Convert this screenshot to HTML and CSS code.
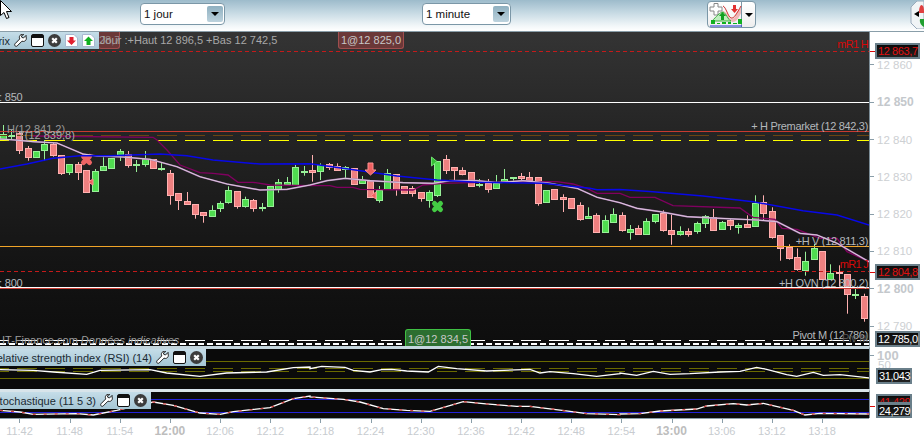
FILE: index.html
```html
<!DOCTYPE html>
<html lang="fr">
<head>
<meta charset="utf-8">
<title>Graphique</title>
<link rel="stylesheet" href="styles.css">
</head>
<body>
<svg class="defs" width="0" height="0" aria-hidden="true">
  <defs>
    <symbol id="wrench" viewBox="0 0 14 14"><path d="M13 1.500 10.200 4.300 8.400 3.600 8 2 10.400.6C8.600-.2 6.400.8 5.900 2.600 5.600 3.600 5.800 4.500 6.200 5.300L1.200 10.400C.5 11.200.6 12.200 1.200 12.800 1.900 13.500 2.900 13.400 3.500 12.800L8.600 7.700C9.500 8.100 10.600 8.200 11.500 7.700 13 7 13.800 5.100 13 3.200Z" fill="#fff" stroke="#111" stroke-width="1"/></symbol>
    <symbol id="win" viewBox="0 0 13 13"><rect x=".5" y=".5" width="12" height="12" rx="1.5" fill="#fff" stroke="#111"/><rect x="1" y="1" width="11" height="3" fill="#111"/></symbol>
    <symbol id="close" viewBox="0 0 13 13"><circle cx="6.500" cy="6.500" r="6.500" fill="#3c3c3c"/><path d="M4.200 4.200 8.800 8.800M8.800 4.200 4.200 8.800" stroke="#fff" stroke-width="2.200"/></symbol>
    <symbol id="docdown" viewBox="0 0 13 13"><path d="M.5.5H9L12.500 4V12.500H.5Z" fill="#fff" stroke="#a8b8d0"/><path d="M4.500 3H8.500V6.500H11L6.500 11 2 6.500H4.500Z" fill="#e02030"/></symbol>
    <symbol id="docup" viewBox="0 0 13 13"><path d="M.5.5H9L12.500 4V12.500H.5Z" fill="#fff" stroke="#a8b8d0"/><path d="M4.500 11H8.500V7H11L6.500 2.500 2 7H4.500Z" fill="#10b020"/></symbol>
  </defs>
</svg>

<header class="toolbar">
  <div class="select select-day"><span>1 jour</span><i class="select-btn"></i></div>
  <div class="select select-minute"><span>1 minute</span><i class="select-btn"></i></div>
  <div class="chart-btn">
    <span class="chart-btn-icon">
      <svg width="33" height="24" viewBox="0 0 33 24">
        <path d="M5 .5H9V4H13V8H9V12H5V8H1V4H5Z" fill="#fff" stroke="#888"/>
        <path d="M13 9C15 7 18 10 20 14 22 18 25 16 27 12 28 9 30 6 32 4V10C30 15 27 19 24 19 21 19 18 13 15 11Z" fill="#f0b8b8"/>
        <path d="M14 3C17 4 19 14 22 15 25 16 28 10 32 3" fill="none" stroke="#d03030"/>
        <path d="M3 18C7 14 11 9 14 9 17 10 19 17 22 18H3Z" fill="#bfeebf" stroke="#40b040"/>
        <path d="M12 17V13H10L13.500 9 17 13H15V17Z" fill="#10a020"/>
        <path d="M24 2H27V6H29L25.500 10 22 6H24Z" fill="#e03030"/>
        <path d="M2 17H6V21H2ZM8 20H11V21H8ZM13 19H17V21H13ZM19 19H22V21H19ZM24 20H28V21H24ZM29 16H33V21H29Z" fill="#10b020"/>
        <path d="M1 23H33" stroke="#2030d0"/>
      </svg>
    </span>
    <span class="chart-btn-drop"><i class="tri"></i></span>
  </div>
  <svg class="side-grip" width="14" height="28" viewBox="0 0 14 28">
    <path d="M14 0H7L1 6V22L7 28H14Z" fill="#f0f4f6" stroke="#9ab"/>
    <path d="M9 16V10L4 13Z" fill="#000"/>
    <path d="M11 4C14 4 14 8 14 12H9C9 9 9 6 11 4Z" fill="#e04040"/>
    <path d="M10 18H14V26C12 25 9 22 10 18Z" fill="#20a030"/>
  </svg>
  <svg class="cursor" width="13" height="20" viewBox="0 0 13 20"><path d="M.5 .5V15.500L4 12.500 6.500 18.500 9 17.500 6.500 11.500H11.500Z" fill="#fff" stroke="#000"/></svg>
</header>

<div class="workspace">
  <div class="panes">
    <section class="pane pane-main">
      <svg id="mainChart" class="plot" width="869" height="314" viewBox="0 32 869 314"></svg>
      <div class="order order-old">28,7</div>
      <div class="label range">Jour :+Haut 12 896,5 +Bas 12 742,5</div>
      <div class="tab tab-top">
        <span class="tab-name">Matrix</span>
        <svg class="ico" width="13" height="13"><use href="#wrench"/></svg>
        <svg class="ico" width="13" height="13"><use href="#win"/></svg>
        <svg class="ico" width="13" height="13"><use href="#close"/></svg>
        <svg class="ico" width="13" height="13"><use href="#docdown"/></svg>
        <svg class="ico" width="13" height="13"><use href="#docup"/></svg>
      </div>
      <div class="order order-sell">1@12 825,0</div>
      <div class="order order-buy">1@12 834,5</div>
      <div class="label red end r1h">mR1 H</div>
      <div class="label lvl850">: 850</div>
      <div class="label lvl800">: 800</div>
      <div class="label h1">H(12 841,2)</div>
      <div class="label h2">T(12 839,8)</div>
      <div class="label end pre">+ H Premarket (12 842,3)</div>
      <div class="label end hv">+H V (12 811,3)</div>
      <div class="label red end r1j">mR1 J</div>
      <div class="label end ovn">+H OVN (12 800,2)</div>
      <div class="label end pivot">Pivot M (12 786)</div>
      <div class="label end pivs">Piv M</div>
      <div class="label credit">IT-Finance.com <em>Données indicatives</em></div>
    </section>
    <section class="pane pane-rsi">
      <svg id="rsiChart" class="plot" width="869" height="40" viewBox="0 349 869 40"></svg>
      <div class="tab tab-rsi">
        <span class="tab-name">Relative strength index (RSI) (14)</span>
        <svg class="ico" width="13" height="13"><use href="#wrench"/></svg>
        <svg class="ico" width="13" height="13"><use href="#win"/></svg>
        <svg class="ico" width="13" height="13"><use href="#close"/></svg>
      </div>
    </section>
    <section class="pane pane-sto">
      <svg id="stoChart" class="plot" width="869" height="26" viewBox="0 392 869 26"></svg>
      <div class="tab tab-sto">
        <span class="tab-name">Stochastique (11 5 3)</span>
        <svg class="ico" width="13" height="13"><use href="#wrench"/></svg>
        <svg class="ico" width="13" height="13"><use href="#win"/></svg>
        <svg class="ico" width="13" height="13"><use href="#close"/></svg>
      </div>
    </section>
    <div class="time-wrap">
      <div class="time-axis">
        <span>11:42</span><span>11:48</span><span>11:54</span><span class="major">12:00</span><span>12:06</span><span>12:12</span><span>12:18</span><span>12:24</span><span>12:30</span><span>12:36</span><span>12:42</span><span>12:48</span><span>12:54</span><span class="major">13:00</span><span>13:06</span><span>13:12</span><span>13:18</span>
      </div>
    </div>
  </div>
  <aside class="price-side">
    <div class="price-axis">
      <span>12 860</span><span class="major">12 850</span><span>12 840</span><span>12 830</span><span>12 820</span><span>12 810</span><span class="major">12 800</span><span>12 790</span>
    </div>
    <div class="osc-axis">
      <span class="major">100</span>
      <span class="fifty">50</span>
    </div>
    <div class="value v-r1h red-val">12 863,7</div>
    <div class="value v-r1j red-val">12 804,8</div>
    <div class="value v-piv">12 785,0</div>
    <div class="value v-rsi">31,043</div>
    <div class="value v-sto2 red-val">41,429</div>
    <div class="value v-sto">24,279</div>
  </aside>
</div>
<script src="chart.js"></script>
</body>
</html>
```

FILE: styles.css
```css
* { box-sizing: border-box; }
html, body { margin: 0; padding: 0; width: 924px; height: 437px; overflow: hidden; background: #fff; }
body { font-family: "Liberation Sans", Arial, sans-serif; font-size: 11px; position: relative; }
.defs { position: absolute; }

/* top toolbar */
.toolbar { height: 32px; position: relative; display: flex; align-items: flex-start; padding-top: 3px; background: linear-gradient(#9dbbcb 0, #c4d8e2 12px, #f2f7f9 26px, #fff 31px); border-bottom: 1px solid #8a9ea9; }
.select { width: 85px; height: 22px; background: #fff; border: 1px solid #7b97a7; border-radius: 4px; display: flex; align-items: center; justify-content: space-between; padding: 0 1px 0 3px; color: #111; font-size: 11.500px; }
.select-day { margin-left: 140px; }
.select-minute { width: 89px; margin-left: 197px; }
.select-btn { width: 16px; height: 16px; border-radius: 2px; background: linear-gradient(#8fb0c0, #bcd2dd); position: relative; }
.select-btn::after, .tri { content: ""; display: block; width: 0; height: 0; border-left: 4px solid transparent; border-right: 4px solid transparent; border-top: 4px solid #000; }
.select-btn::after { position: absolute; left: 4px; top: 6px; }
.chart-btn { width: 49px; height: 27px; margin: -2px 0 0 196px; display: flex; border: 1px solid #7b97a7; border-radius: 4px; background: linear-gradient(#fff, #eee); }
.chart-btn-icon { width: 34px; padding: 1px 0 0 1px; border-right: 1px solid #7b97a7; }
.chart-btn-drop { flex: 1; display: flex; align-items: center; justify-content: center; }
.side-grip { margin: -2px 0 0 154px; }
.cursor { position: absolute; left: 0; top: 0; }

/* work area */
.workspace { display: flex; height: 405px; }
.panes { width: 870px; display: flex; flex-direction: column; }
.pane { position: relative; width: 870px; overflow: hidden; border-right: 1px solid #7b8c96; }
.plot { display: block; }
.pane-main { height: 314px; background: linear-gradient(#343434 0, #232323 110px, #141414 230px, #0d0d0d 100%); }
.pane-rsi { height: 43px; background: #0a0a0a; border-top: 3px solid #c5d6de; }
.pane-sto { height: 29px; background: #0a0a0a; border-top: 3px solid #d8e4ea; }
.time-wrap { height: 19px; border-top: 1px solid #8a9ea9; overflow: hidden; width: 869px; }
.time-axis { display: flex; margin-left: -5.600px; }
.time-axis span { flex: 0 0 50.160px; text-align: center; color: #c8ccd0; font-size: 11px; padding-top: 6px; position: relative; }
.time-axis span::before { content: ""; position: absolute; left: 50%; top: 0; width: 1px; height: 4px; background: #8a9ea9; }
.time-axis .major { font-weight: bold; font-size: 12px; padding-top: 5px; color: #bdbdbd; }

/* tabs */
.tab { position: absolute; left: 0; top: 0; display: flex; align-items: center; justify-content: flex-end; gap: 4px; height: 17px; background: linear-gradient(#c5dde8, #a5c6d5); color: #1b2a33; font-size: 11px; overflow: hidden; white-space: nowrap; }
.tab-top { width: 99px; padding-right: 4px; }
.tab-name { flex: none; }
.ico { flex: none; display: block; }
.tab-rsi { width: 206px; padding-right: 3px; }
.tab-sto { width: 151px; padding-right: 4px; }

/* chart texts */
.label { position: absolute; color: #b4b8bc; font-size: 11px; line-height: 14px; white-space: nowrap; }
.label.end { right: 1px; letter-spacing: -0.320px; }
.label.red { color: #d80808; font-size: 11px; letter-spacing: -0.700px; }
.range { left: 100px; top: 1px; color: #a8a8a8; }
.r1h { top: 5px; }
.lvl850 { left: -1px; top: 58px; letter-spacing: -0.200px; }
.lvl800 { left: -1px; top: 244px; letter-spacing: -0.200px; }
.h1 { left: 7px; top: 90px; color: #999; }
.h2 { left: 18px; top: 96px; color: #aaa; }
.pre { top: 87px; }
.hv { top: 202px; }
.r1j { top: 225px; }
.ovn { top: 244px; }
.pivot { top: 296px; }
.pivs { top: 299px; color: #555; }
.credit { left: 2px; top: 301px; color: #9c9c9c; }
.order { position: absolute; font-size: 11px; color: #c8c8c8; text-align: center; line-height: 14px; }
.order-sell { left: 338px; top: 0; width: 66px; height: 17px; background: #6b3838; border: 1px solid #a04e4e; border-top: 0; border-radius: 0 0 3px 3px; padding-top: 1px; }
.order-old { left: 98px; top: 0; width: 22px; height: 17px; background: #6b3838; border: 1px solid #a04e4e; border-top: 0; border-radius: 0 0 3px 3px; padding-top: 1px; color: #9a8a8a; overflow: hidden; text-align: left; }
.order-buy { left: 405px; top: 297px; width: 66px; height: 17px; background: #2c6e30; border: 1px solid #3fc044; border-bottom: 0; border-radius: 3px 3px 0 0; padding-top: 2px; }

/* price side */
.price-side { width: 54px; position: relative; }
.price-axis { display: flex; flex-direction: column; padding-top: 14.300px; }
.price-axis span, .osc-axis span { height: 37.300px; display: flex; align-items: center; gap: 3px; color: #cdd0d3; font-size: 11.500px; }
.price-axis span::before, .osc-axis .major::before { content: ""; width: 4px; height: 1px; background: #8a9ea9; flex: none; }
.price-axis .major, .osc-axis .major { font-weight: bold; font-size: 12px; color: #c4c8cc; }
.osc-axis { position: absolute; left: 0; top: 310px; }
.osc-axis span { height: 26px; }
.osc-axis .major { font-size: 13px; }
.osc-axis .fifty { position: absolute; left: 8px; top: 15px; height: 16px; }
.value { position: absolute; left: 5px; height: 16px; padding: 0 1px; background: linear-gradient(#0a0a0a, #222); border: 2px solid #6a7f8a; color: #fff; font-size: 11px; line-height: 12px; white-space: nowrap; letter-spacing: -0.400px; }
.red-val { color: #e01010; }
.v-r1h::before, .v-r1j::before, .v-sto::before { content: ""; position: absolute; left: -7px; top: 6px; width: 5px; height: 1px; background: #d80808; }
.v-r1h { top: 11px; width: 45px; }
.v-r1j { top: 232px; width: 45px; }
.v-piv { top: 299px; width: 45px; }
.v-rsi { top: 336px; width: 36px; left: 6px; }
.v-sto2 { top: 362px; width: 36px; left: 6px; height: 10px; line-height: 12px; overflow: hidden; }
.v-sto { top: 371px; width: 36px; left: 6px; height: 15px; }
.v-sto::before { left: -8px; top: 1px; }

/* svg strokes */
.c-up { fill: #50dc50; stroke: #98f098; }
.w-up { stroke: #98f098; }
.c-dn { fill: #ee8080; stroke: #ffb0b0; }
.w-dn { stroke: #ffb0b0; }
.ln { fill: none; stroke-width: 1; }
.dash-red { stroke: #c41a1a; stroke-dasharray: 4 3; }
.solid-white { stroke: #fff; }
.solid-red { stroke: #c83a30; }
.dash-brown { stroke: #6a4412; stroke-dasharray: 20 8; stroke-dashoffset: 11; }
.dash-yellow { stroke: #ffff00; stroke-dasharray: 20 8; stroke-dashoffset: 11; }
.solid-orange { stroke: #f0a428; }
.dash-white { stroke: #fff; stroke-dasharray: 20 8; stroke-dashoffset: 11; }
.dash-white2 { stroke: #fff; stroke-width: 2; stroke-dasharray: 6 3; }
.ma-blue { stroke: #0808e8; stroke-width: 1.500; }
.ma-mag { stroke: #800060; stroke-width: 1.300; }
.ma-pink { stroke: #a070a8; stroke-width: 1.700; }
.ma-white { stroke: #ecdcec; stroke-width: 0.800; }
.olive { stroke: #6a6a00; }
.olive-d { stroke: #6a6a00; stroke-dasharray: 20 8; stroke-dashoffset: 11; }
.osc-w { stroke: #fff; stroke-width: 1.300; }
.osc-r { stroke: #d04848; stroke-width: 1.300; stroke-dasharray: 3 8; }
.blue { stroke: #2222d8; }
.mk-red { fill: #ee6060; stroke: #ff9090; }
.mk-green { fill: #38c038; stroke: #70e070; }
.x-red { stroke: #ee6464; stroke-width: 5; fill: none; }
.x-green { stroke: #44cc44; stroke-width: 5; fill: none; }
```

FILE: chart.js
```js
var NS = "http://www.w3.org/2000/svg";

function add(svg, tag, attrs) {
  var el = document.createElementNS(NS, tag);
  for (var k in attrs) el.setAttribute(k, attrs[k]);
  svg.appendChild(el);
  return el;
}
function poly(pts) {
  return pts.map(function (p, i) { return (i ? "L" : "M") + p[0] + " " + p[1]; }).join("");
}
function hline(svg, y, cls) {
  add(svg, "path", { d: "M0 " + y + "H869", "class": "ln " + cls });
}
function zoomed(pts, x0, y0) {
  return pts.map(function (p) { return [x0 + p[0] / 3, y0 + p[1] / 3]; });
}

/* x, body top, body bottom, wick top, wick bottom */
var UP = [
  [3,134,139,125,141],[11,135,136,130,140],[36,151.3,156.7,151,157],[44,144,150.3,140,160.7],
  [69,164.3,171.7,164,175],[95,171.3,190.7,169,192],[103,166.3,169.7,157.3,170],[111,158,167.7,158,168],
  [120,151.3,155.3,149,161],[136,164,164.5,160,172],[145,158.7,163.7,151,166.7],[161,167.7,168.7,162.7,170.7],
  [212,210.3,215.7,205.3,216.7],[220,203.3,207.7,201.3,212],[228,190.3,201.7,186.3,203.7],[245,199.3,205.7,196.7,207.7],
  [262,207,207.5,203,211.3],[270,186.3,205.7,186,206],[278,182.3,189,179,192.7],[287,182,184,177,185],
  [295,167.3,184.7,165,185],[304,170.7,171,166,175.7],[320,164.7,170.7,163.3,180],[345,167.3,168.7,166,178],
  [362,179.7,182.7,176,183],[379,190,199.7,186,202.7],[387,173,189,169,189.5],[429,192.3,199.7,190.3,207.7],
  [437,161.3,194.7,161,197],[479,184,184.5,179,187.3],[496,183.3,187.7,175,188],[504,179,180.7,169,181],
  [513,177,177.7,177,180.7],[546,190.3,201.7,190,203],[588,216.3,217.7,207.3,218],[605,220.3,231.7,215.3,232],
  [613,214.3,221.7,208.3,222.7],[630,229.3,231.7,225,239.7],[646,221.3,233.7,218.3,234],[655,214.3,220.7,214,223.3],
  [680,231.3,233.7,226.3,235.7],[697,223.3,230.7,221.7,233.7],[705,216.3,222.7,215,228],[722,222.3,228.7,221,230],
  [738,225.3,226.7,223.3,233.7],[755,203,225.7,195.3,226],[805,260.7,269.7,251.7,275.7],[814,248.3,259.3,244,260],
  [830,273.3,278.7,264.3,279],[855,294,294.5,289,299]
];
var DOWN = [
  [19,133,149.5,132,154],[28,148.3,157.3,146,160.7],[53,144.3,154.7,142.7,156.7],[61,155.3,172.7,155,175],
  [78,164.3,171.7,162,180],[86,170,191.7,170,192.7],[128,154,164.7,151,167.7],[153,159.3,167.7,159,169],
  [170,173.3,194.7,170,204.7],[178,193.3,199.7,193,210],[187,201.3,203.7,192,205],[195,204.3,213.7,204,218.7],
  [203,212.3,214.7,212,222.7],[237,191.3,205.7,191,208.7],[253,200.3,207.7,199,211.7],[312,170,171.7,155,181.7],
  [329,164.3,166.7,163,170],[337,166,169.7,163.3,170],[354,168.3,183.7,168,184],[370,180.7,196.7,180,197.5],
  [396,174.3,189.3,174,195.7],[404,186.3,192.7,186,193],[412,188.3,192.7,186,196.7],[421,192.3,197.7,192,201.7],
  [446,159.3,169.7,155,174],[454,167.3,169.7,167,180],[462,170.3,173.7,167.3,175.3],[471,172.3,185.7,172,186],
  [488,183,188.7,179,192.7],[521,176,177.7,173,180.7],[529,177.3,180,172,180.5],[538,177.3,202.7,177,205.7],
  [554,189.3,198.7,189,199],[563,197.3,199.3,194.3,212],[571,198.3,207.7,198,208.5],[580,205.3,218.7,202.3,220.7],
  [596,215.3,231.7,213.3,232],[622,215.3,229.7,212.3,231.7],[638,228.3,233.7,225.3,234],[663,213.3,229.7,210.3,231.7],
  [671,230.3,233.7,214.7,244.7],[688,231.3,233.7,228.3,236.7],[713,217.3,229.7,209,230.7],[730,220,224.7,218.3,230],
  [747,224.3,226.7,215.3,228],[763,202.3,212.7,195.3,220.7],[772,211,236.7,207.3,238.7],[780,235.3,247.7,235,260.7],
  [789,246.7,257.7,244.3,259.7],[797,257.3,268.7,248.3,270.7],[822,251.3,279.3,251,279.5],[839,272,273.3,265.3,286.7],
  [847,274.3,294.3,274,313.7],[864,296.3,317.7,293.7,321.7]
];

function candles(svg, list, body, wick) {
  list.forEach(function (c) {
    var x = c[0];
    add(svg, "path", { d: "M" + (x + 0.5) + " " + c[3] + "V" + c[4], "class": wick, fill: "none" });
    var t = Math.round(c[1]) + 0.5;
    var h = Math.max(1, Math.round(c[2]) - Math.round(c[1]));
    add(svg, "rect", { x: x - 2.5, y: t, width: 6, height: h, "class": body });
  });
}

var BLUE = [[0,169],[27,164],[53,158.3],[80,155.7],[110,155.7],[160,154],[187,155.7],[213,160],[260,164],[310,163.8],
  [343,168.3],[397,176],[437,180],[477,182.3],[543,183.3],[590,188.3],[597,189.7],[620,189.5],[653,191.7],[703,196],
  [753,201.7],[803,210.7],[837,215],[869,225]];
var PINK = [[0,139],[15,140],[33,141.7],[57,143],[83,154],[97,156],[123,157],[150,159.3],[177,166.7],[200,176.7],[227,184],
  [260,190],[287,189.3],[310,185],[327,180.7],[345,178.3],[370,180.7],[403,182.7],[433,183.3],[450,180.7],[477,180.7],
  [497,182.7],[523,180.7],[550,183.3],[577,188.3],[597,197.3],[620,202.7],[637,208.3],[660,211.7],[687,216.7],[720,218.3],
  [757,220],[777,221.7],[800,233.3],[817,235],[837,243.3],[869,261.7]];
var MAG = [[33,136],[153,137.3],[157,140],[167,150],[180,165],[200,172.7],[213,173.3],[228,175],[238,182.3],[253,182.3],
  [270,185],[310,185.7],[330,185.7],[337,187.3],[353,187.3],[360,189.3],[413,190],[423,185],[443,183.3],[470,182.7],
  [543,181.7],[557,181.7],[573,184],[587,188.3],[597,193.3],[620,193.3],[630,197.3],[655,197.3],[673,205.7],[740,208],
  [753,217.3],[775,219.3],[782,228.3],[797,229.3],[820,238.3],[837,238.3],[847,251.7],[869,261.7]];

var main = document.getElementById("mainChart");

/* trade markers under the averages */
function cross(cx, cy, cls) {
  add(main, "path", {
    d: "M" + (cx - 3) + " " + (cy - 3) + "l6 6m0-6l-6 6",
    "class": cls,
    "stroke-linecap": "round"
  });
}

candles(main, DOWN, "c-dn", "w-dn");
candles(main, UP, "c-up", "w-up");
hline(main, 51.5, "dash-red");
hline(main, 102.5, "solid-white");
hline(main, 131.5, "solid-red");
hline(main, 135.5, "dash-brown");
hline(main, 140.5, "dash-yellow");
hline(main, 246.5, "solid-orange");
hline(main, 271.5, "dash-red");
hline(main, 287.5, "solid-white");
hline(main, 288.5, "solid-red");
hline(main, 340.5, "dash-white");
hline(main, 344, "dash-white2");
cross(86.5, 159.5, "x-red");
cross(437.5, 206.5, "x-green");
add(main, "path", { d: poly(MAG), "class": "ln ma-mag" });
add(main, "path", { d: poly(PINK), "class": "ln ma-pink" });
add(main, "path", { d: poly(PINK), "class": "ln ma-white" });
add(main, "path", { d: poly(BLUE), "class": "ln ma-blue" });
add(main, "path", { d: "M93 179V185L88 182Z", "class": "mk-red" });
add(main, "path", { d: "M376 192V199L371 195.5Z", "class": "mk-red" });
add(main, "path", { d: "M368 163H373V170H376L370.5 175 365 170H368Z", "class": "mk-red" });
add(main, "path", { d: "M431.5 157V166L437 161.5Z", "class": "mk-green" });

/* RSI */
var rsi = document.getElementById("rsiChart");
hline(rsi, 361.5, "olive");
hline(rsi, 368.5, "olive-d");
hline(rsi, 371.5, "olive-d");
hline(rsi, 378.5, "olive");
var RSI = zoomed([[0,248],[100,250],[160,255],[260,262],[300,250],[450,248],[500,258],[600,268],[680,258],[800,255],[880,242],[930,240]], 0, 287)
  .concat(zoomed([[0,245],[35,238],[105,241],[130,250],[180,255],[215,248],[245,247],[290,252],[355,255],[385,238],[410,241],[440,245],[530,252],[660,247],[690,258],[720,254],[790,260],[860,268],[930,260]], 310, 287))
  .concat(zoomed([[0,258],[50,265],[100,253],[150,262],[210,260],[300,255],[360,253],[410,241],[440,247],[500,263],[530,268],[580,256],[610,265],[660,263],[748,273]], 620, 287));
add(rsi, "path", { d: poly(RSI), "class": "ln osc-w" });

/* Stochastic */
var sto = document.getElementById("stoChart");
hline(sto, 399.5, "blue");
hline(sto, 412.5, "blue");
var STO = zoomed([[0,370],[60,375],[100,382],[230,380],[280,384],[350,370],[460,345],[520,355],[600,378],[660,382],[700,374],[810,362],[880,335],[930,327]], 0, 287)
  .concat(zoomed([[0,330],[100,337],[150,345],[220,365],[290,370],[360,373],[460,344],[520,350],[620,358],[660,358],[780,373],[830,380],[930,383]], 310, 287))
  .concat(zoomed([[0,381],[60,380],[120,372],[230,366],[260,357],[340,350],[380,354],[430,349],[520,370],[555,384],[600,379],[748,381]], 620, 287));
add(sto, "path", { d: poly(STO), "class": "ln osc-w" });
add(sto, "path", { d: poly(STO), "class": "ln osc-r" });
```
